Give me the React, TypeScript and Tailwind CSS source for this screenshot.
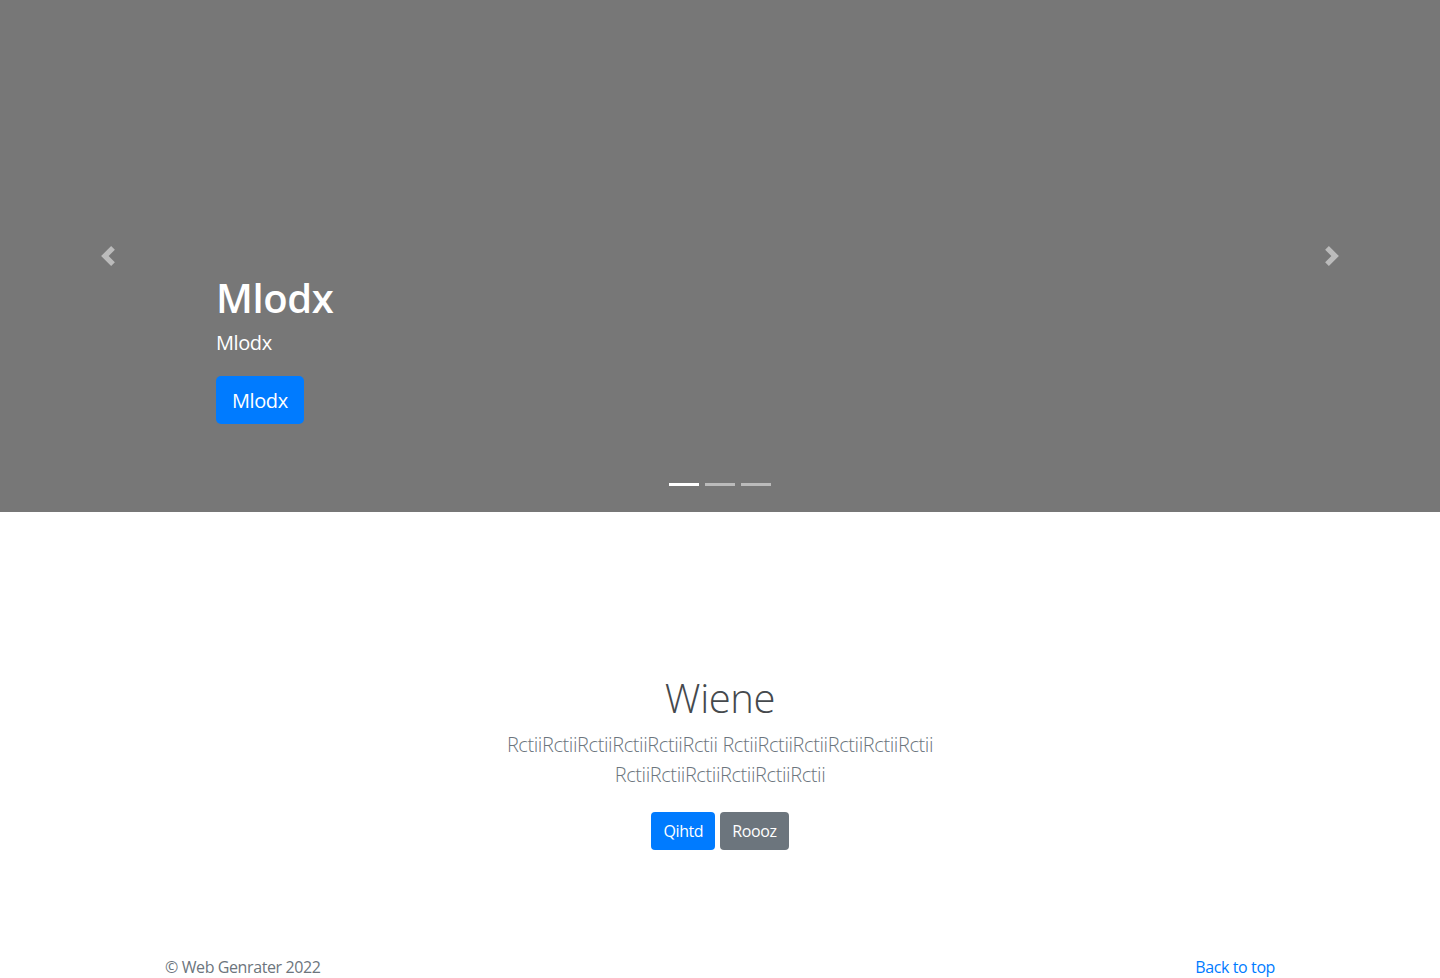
import React from "react";

const font = { fontFamily: '"Open Sans", "Noto Sans", Arial, sans-serif' };

const Chevron = ({ dir }: { dir: "left" | "right" }) => (
  <svg width="20" height="20" viewBox="0 0 8 8" fill="#fff" className="opacity-50">
    {dir === "left" ? (
      <path d="M5.25 0l-4 4 4 4 1.5-1.5L4.25 4l2.5-2.5L5.25 0z" />
    ) : (
      <path d="M2.75 0l-1.5 1.5L3.75 4l-2.5 2.5L2.75 8l4-4-4-4z" />
    )}
  </svg>
);

const App = () => {
  return (
    <div className="bg-white min-h-screen tracking-[-0.025em]" style={font}>
      <div className="relative h-[512px] bg-[#777] flex">
        <button className="w-[15%] flex items-center justify-center">
          <Chevron dir="left" />
        </button>
        <div className="flex-1 flex flex-col justify-end pb-[88px] text-white">
          <h1 className="text-[40px] leading-[48px] font-semibold mb-[6px]">Mlodx</h1>
          <p className="text-[20px] leading-[30px] mb-[18px]">Mlodx</p>
          <div>
            <button className="bg-[#007bff] text-white text-[20px] leading-[30px] px-4 pt-[10px] pb-[8px] rounded-[5px]">
              Mlodx
            </button>
          </div>
        </div>
        <button className="w-[15%] flex items-center justify-center">
          <Chevron dir="right" />
        </button>
        <div className="absolute bottom-[26px] left-0 right-0 flex justify-center gap-[6px]">
          <span className="w-[30px] h-[3px] bg-white" />
          <span className="w-[30px] h-[3px] bg-white opacity-50" />
          <span className="w-[30px] h-[3px] bg-white opacity-50" />
        </div>
      </div>

      <section className="pt-[162px] flex flex-col items-center text-center">
        <h1 className="text-[40px] leading-[48px] font-light text-[#45494d] mb-[8px]">Wiene</h1>
        <p className="w-[540px] text-[20px] leading-[30px] font-light text-[#6c757d] mb-[22px]">
          RctiiRctiiRctiiRctiiRctiiRctii RctiiRctiiRctiiRctiiRctiiRctii RctiiRctiiRctiiRctiiRctiiRctii
        </p>
        <div className="flex gap-[5px]">
          <button className="bg-[#007bff] text-white text-[16px] leading-[24px] px-3 py-[7px] rounded-[4px]">
            Qihtd
          </button>
          <button className="bg-[#6c757d] text-white text-[16px] leading-[24px] px-3 py-[7px] rounded-[4px]">
            Roooz
          </button>
        </div>
      </section>

      <footer className="mt-[105px] w-[1140px] mx-auto px-[15px] flex justify-between text-[16px] leading-[24px]">
        <p className="text-[#6c757d]">© Web Genrater 2022</p>
        <a href="#" className="text-[#007bff]">Back to top</a>
      </footer>
    </div>
  );
};

export default App;
